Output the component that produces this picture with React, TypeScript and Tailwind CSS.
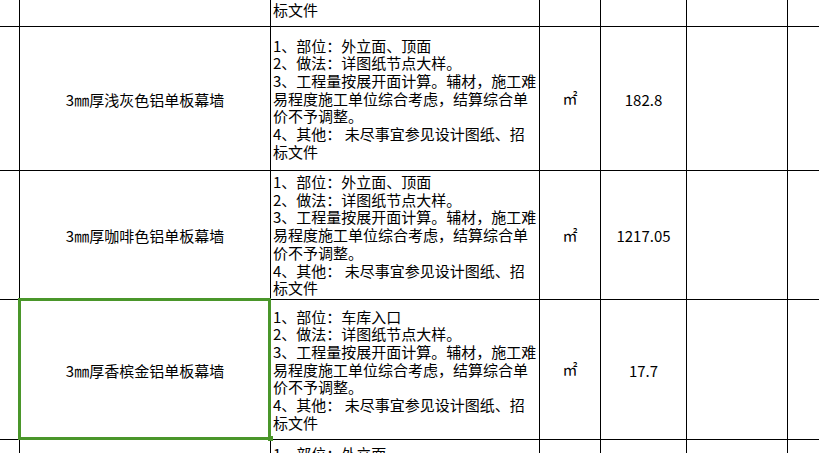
const desc = (place: string) => [
  `1、部位：${place}`,
  "2、做法：详图纸节点大样。",
  "3、工程量按展开面计算。辅材，施工难",
  "易程度施工单位综合考虑，结算综合单",
  "价不予调整。",
  "4、其他： 未尽事宜参见设计图纸、招",
  "标文件",
];

const items = [
  { name: "3㎜厚浅灰色铝单板幕墙", lines: desc("外立面、顶面"), qty: "182.8", h: "h-[144px]" },
  { name: "3㎜厚咖啡色铝单板幕墙", lines: desc("外立面、顶面"), qty: "1217.05", h: "h-[129px]" },
  { name: "3㎜厚香槟金铝单板幕墙", lines: desc("车库入口"), qty: "17.7", h: "h-[140px]" },
];

const cell = "shrink-0 border-r border-black";

const Row = ({
  h,
  name,
  lines,
  unit,
  qty,
  align = "justify-center",
  pad = "",
}: {
  h: string;
  name?: string;
  lines: string[];
  unit?: string;
  qty?: string;
  align?: string;
  pad?: string;
}) => (
  <div className={`flex ${h} border-b border-black`}>
    <div className={`${cell} w-[20px]`} />
    <div className={`${cell} w-[251px] flex items-center justify-center pt-[3px]`}>
      {name}
    </div>
    <div
      className={`${cell} w-[269px] flex flex-col ${align} ${pad} pl-[2px] leading-[17.7px] whitespace-pre overflow-hidden`}
    >
      {lines.map((l, i) => (
        <div key={i}>{l}</div>
      ))}
    </div>
    <div className={`${cell} w-[61px] flex items-center justify-center`}>{unit}</div>
    <div className={`${cell} w-[86px] flex items-center justify-center pt-[3px]`}>{qty}</div>
    <div className={`${cell} w-[101px]`} />
    <div className="flex-1" />
  </div>
);

export default function App() {
  return (
    <div className="relative w-[819px] h-[453px] overflow-hidden bg-white text-[15px] text-black font-['Noto_Sans_CJK_SC',sans-serif]">
      <Row h="h-[27px]" lines={["标文件"]} align="justify-start" pad="pt-[1px]" />
      {items.map((it) => (
        <Row key={it.name} h={it.h} name={it.name} lines={it.lines} unit="㎡" qty={it.qty} />
      ))}
      <div className="flex h-[20px]">
        <div className={`${cell} w-[20px]`} />
        <div className={`${cell} w-[251px]`} />
        <div className={`${cell} w-[269px] pl-[2px] pt-[5px] leading-[17.7px] whitespace-pre`}>
          1、部位：外立面
        </div>
        <div className={`${cell} w-[61px]`} />
        <div className={`${cell} w-[86px]`} />
        <div className={`${cell} w-[101px]`} />
        <div className="flex-1" />
      </div>

      {/* selected cell */}
      <div className="absolute left-[18px] top-[298px] w-[253px] h-[142px] border-[3px] border-[#4a962a]" />
      <div className="absolute left-[268px] top-[436px] w-[5px] h-[5px] bg-[#4a962a]" />
    </div>
  );
}
